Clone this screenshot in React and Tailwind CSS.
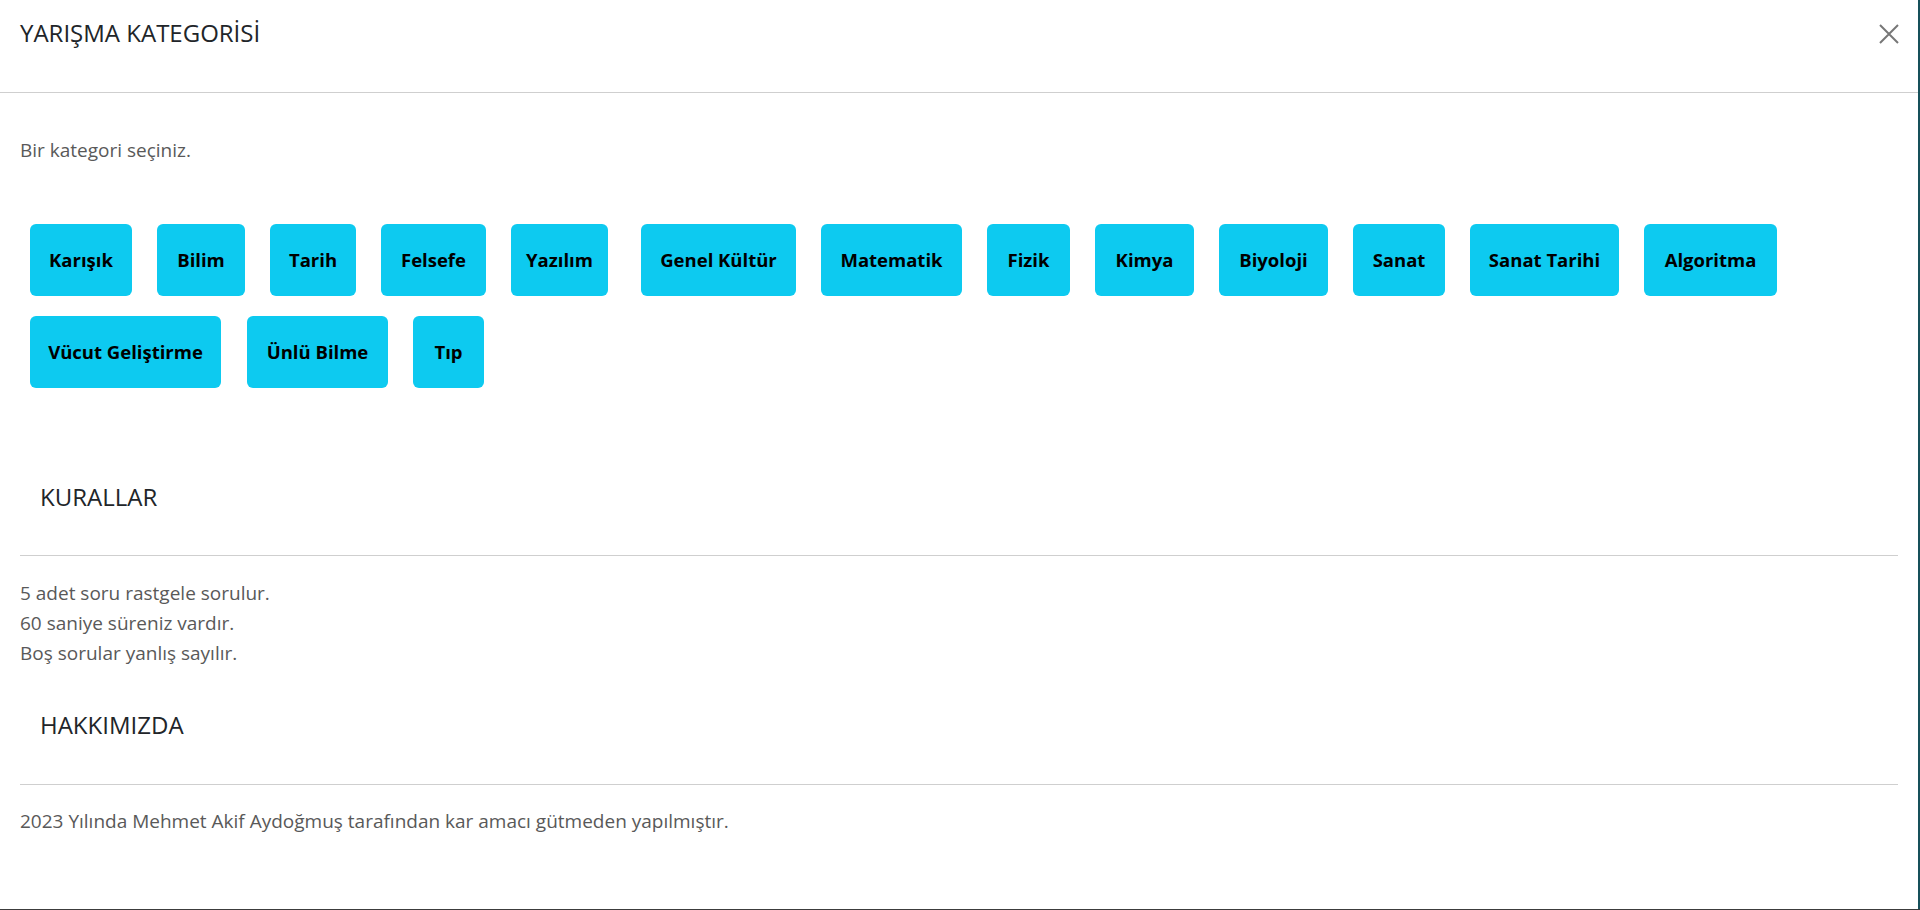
import React from "react";

const cats = [
  ["Karışık", "w-[102px]"],
  ["Bilim", "w-[88px]"],
  ["Tarih", "w-[86px]"],
  ["Felsefe", "w-[105px]"],
  ["Yazılım", "w-[97px]"],
  ["Genel Kültür", "w-[155px] ml-[8px]"],
  ["Matematik", "w-[141px]"],
  ["Fizik", "w-[83px]"],
  ["Kimya", "w-[99px]"],
  ["Biyoloji", "w-[109px]"],
  ["Sanat", "w-[92px]"],
  ["Sanat Tarihi", "w-[149px]"],
  ["Algoritma", "w-[133px]"],
  ["Vücut Geliştirme", "w-[191px]"],
  ["Ünlü Bilme", "w-[141px] ml-px"],
  ["Tıp", "w-[71px]"],
];

export default function App() {
  return (
    <div className="w-full h-[910px] bg-[#17505a] border-b border-[#3c3c3c] font-['Open_Sans','Noto_Sans',sans-serif]">
      <div className="w-[1918px] h-[909px] bg-white flex flex-col">
        <div className="h-[93px] shrink-0 border-b border-[#cfcfcf] flex items-start justify-between pl-5 pr-[19px] pt-[17px]">
          <h5 className="text-[24px] leading-[32px] text-[#212529]">YARIŞMA KATEGORİSİ</h5>
          <button className="mt-[7px] w-5 h-5 text-[#777]" aria-label="Kapat">
            <svg viewBox="0 0 20 20" width="20" height="20" fill="none" stroke="currentColor" strokeWidth="2">
              <path d="M1 1L19 19M19 1L1 19" />
            </svg>
          </button>
        </div>
        <div className="px-5">
          <p className="mt-[42px] text-[19px] leading-[30px] text-[#595959]">Bir kategori seçiniz.</p>
          <div className="mt-[59px] ml-[10px] flex flex-wrap gap-x-[25px] gap-y-[20px]">
            {cats.map(([name, w]) => (
              <button
                key={name}
                className={`${w} h-[72px] rounded-md bg-[#0dcaf0] text-black font-bold text-[18.5px] flex items-center justify-center`}
              >
                {name}
              </button>
            ))}
          </div>
          <h5 className="mt-[93px] pl-5 text-[24px] leading-[32px] text-[#212529]">KURALLAR</h5>
          <div className="mt-[42px] border-t border-[#cfcfcf]"></div>
          <div className="mt-[22px] text-[19px] leading-[30px] text-[#595959]">
            <p>5 adet soru rastgele sorulur.</p>
            <p>60 saniye süreniz vardır.</p>
            <p>Boş sorular yanlış sayılır.</p>
          </div>
          <h5 className="mt-[41px] pl-5 text-[24px] leading-[32px] text-[#212529]">HAKKIMIZDA</h5>
          <div className="mt-[43px] border-t border-[#cfcfcf]"></div>
          <p className="mt-[21px] text-[19px] leading-[30px] text-[#595959]">
            2023 Yılında Mehmet Akif Aydoğmuş tarafından kar amacı gütmeden yapılmıştır.
          </p>
        </div>
      </div>
    </div>
  );
}
